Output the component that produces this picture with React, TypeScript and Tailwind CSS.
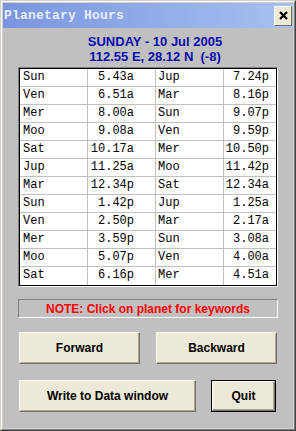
import React from 'react';

const rows: [string, string, string, string][] = [
  ['Sun', '5.43a', 'Jup', '7.24p'],
  ['Ven', '6.51a', 'Mar', '8.16p'],
  ['Mer', '8.00a', 'Sun', '9.07p'],
  ['Moo', '9.08a', 'Ven', '9.59p'],
  ['Sat', '10.17a', 'Mer', '10.50p'],
  ['Jup', '11.25a', 'Moo', '11.42p'],
  ['Mar', '12.34p', 'Sat', '12.34a'],
  ['Sun', '1.42p', 'Jup', '1.25a'],
  ['Ven', '2.50p', 'Mar', '2.17a'],
  ['Mer', '3.59p', 'Sun', '3.08a'],
  ['Moo', '5.07p', 'Ven', '4.00a'],
  ['Sat', '6.16p', 'Mer', '4.51a'],
];

const sans = "font-['Liberation_Sans',Arial,sans-serif]";
const mono = "font-['Liberation_Mono','Courier_New',monospace]";

// classic beveled push button
const Button: React.FC<{ label: string; w: string; isDefault?: boolean }> = ({ label, w, isDefault }) => (
  <div className={`${w} h-[32px] ${isDefault ? 'border border-black' : ''}`}>
    <div className="w-full h-full bg-[#ece9d8] border-t border-l border-white border-b border-r border-b-[#716f64] border-r-[#716f64] shadow-[inset_-1px_-1px_#aca899] flex items-center justify-center">
      <span className={`${sans} text-[12px] font-bold text-black`}>{label}</span>
    </div>
  </div>
);

const App: React.FC = () => {
  return (
    <div className="w-[296px] h-[431px] border border-t-[#d4d0c8] border-l-[#d4d0c8] border-b-[#404040] border-r-[#404040]">
      <div className="w-full h-full border border-t-white border-l-white border-b-[#808080] border-r-[#808080] bg-[#d4d0c8] p-px">
        <div className="w-full h-full flex flex-col bg-[#c0c0c0]">
          {/* Title bar */}
          <div className="h-[25px] flex items-center justify-between bg-gradient-to-r from-[#7a95de] to-[#a7c1f0] pl-[1px] pr-[1px]">
            <span className={`${mono} text-[13px] font-bold text-[#e6ecf8] tracking-[0.2px]`}>Planetary Hours</span>
            <div className="w-[18px] h-[20px] bg-[#ece9d8] border-t border-l border-white border-b border-r border-b-[#716f64] border-r-[#716f64] flex items-center justify-center">
              <svg width="9" height="9" viewBox="0 0 9 9">
                <path d="M1 1 L8 8 M8 1 L1 8" stroke="#000" strokeWidth="2.2" />
              </svg>
            </div>
          </div>

          {/* Date / location */}
          <div className={`${sans} text-[13px] font-bold text-[#0a0ab0] text-center leading-[15px] mt-[6px] pl-[14px]`}>
            <div>SUNDAY - 10 Jul 2005</div>
            <div className="whitespace-pre">112.55 E, 28.12 N  (-8)</div>
          </div>

          {/* Hours table */}
          <div className="mt-[3px] ml-[15px] w-[260px] border border-t-[#808080] border-l-[#808080] border-b-white border-r-white">
            <div className="border border-black bg-white grid grid-cols-[68px_68px_68px_52px]">
              {rows.map((r, i) => {
                const last = i === rows.length - 1;
                const rb = last ? '' : 'border-b';
                return (
                  <React.Fragment key={i}>
                    <div className={`h-[18px] ${rb} border-r border-[#c0c0c0] pl-[3px] ${mono} text-[12px] leading-[17px] text-black`}>{r[0]}</div>
                    <div className={`h-[18px] ${rb} border-r border-[#c0c0c0] pr-[21px] text-right ${mono} text-[12px] leading-[17px] text-black`}>{r[1]}</div>
                    <div className={`h-[18px] ${rb} border-r border-[#c0c0c0] pl-[2px] ${mono} text-[12px] leading-[17px] text-black`}>{r[2]}</div>
                    <div className={`h-[18px] ${rb} border-[#c0c0c0] pr-[7px] text-right ${mono} text-[12px] leading-[17px] text-black`}>{r[3]}</div>
                  </React.Fragment>
                );
              })}
            </div>
          </div>

          {/* Note */}
          <div className="mt-[12px] ml-[15px] w-[260px] h-[19px] border border-t-[#808080] border-l-[#808080] border-b-white border-r-white flex items-center justify-center">
            <span className={`${sans} text-[12px] font-bold text-[#ff0000]`}>NOTE: Click on planet for keywords</span>
          </div>

          {/* Buttons */}
          <div className="mt-[14px] ml-[16px] flex gap-[16px]">
            <Button label="Forward" w="w-[121px]" />
            <Button label="Backward" w="w-[121px]" />
          </div>
          <div className="mt-[16px] ml-[16px] flex gap-[15px]">
            <Button label="Write to Data window" w="w-[177px]" />
            <Button label="Quit" w="w-[65px]" isDefault />
          </div>
        </div>
      </div>
    </div>
  );
};

export default App;
